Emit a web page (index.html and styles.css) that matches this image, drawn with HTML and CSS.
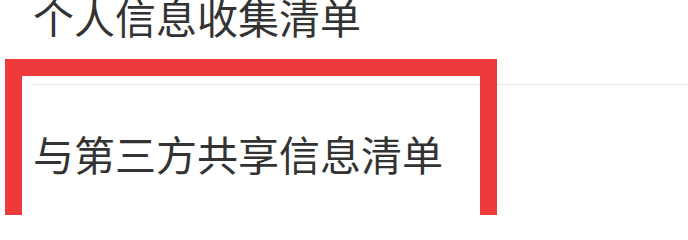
FILE: index.html
```html
<!DOCTYPE html>
<html lang="zh-CN">
<head>
<meta charset="utf-8">
<title>清单</title>
<link rel="stylesheet" href="styles.css">
</head>
<body>
<div class="page">
  <ul class="list">
    <li class="item">个人信息收集清单</li>
    <li class="item">与第三方共享信息清单</li>
  </ul>
  <div class="highlight"></div>
</div>
</body>
</html>
```

FILE: styles.css
```css
html, body {
  margin: 0;
  padding: 0;
  background: #ffffff;
}
.page {
  position: relative;
  width: 688px;
  height: 215px;
  overflow: hidden;
}
.list {
  list-style: none;
  margin: -52px 0 0 33px;
  padding: 0;
}
.item {
  display: flex;
  align-items: center;
  height: 136px;
  font-family: "Noto Sans CJK SC", "Noto Sans", sans-serif;
  font-size: 41px;
  color: #333333;
  line-height: 1;
}
.item + .item {
  border-top: 1px solid #e6e6e6;
}
.highlight {
  position: absolute;
  left: 5px;
  top: 59px;
  width: 492px;
  height: 220px;
  box-sizing: border-box;
  border: 17px solid #ee3a3b;
}
```
